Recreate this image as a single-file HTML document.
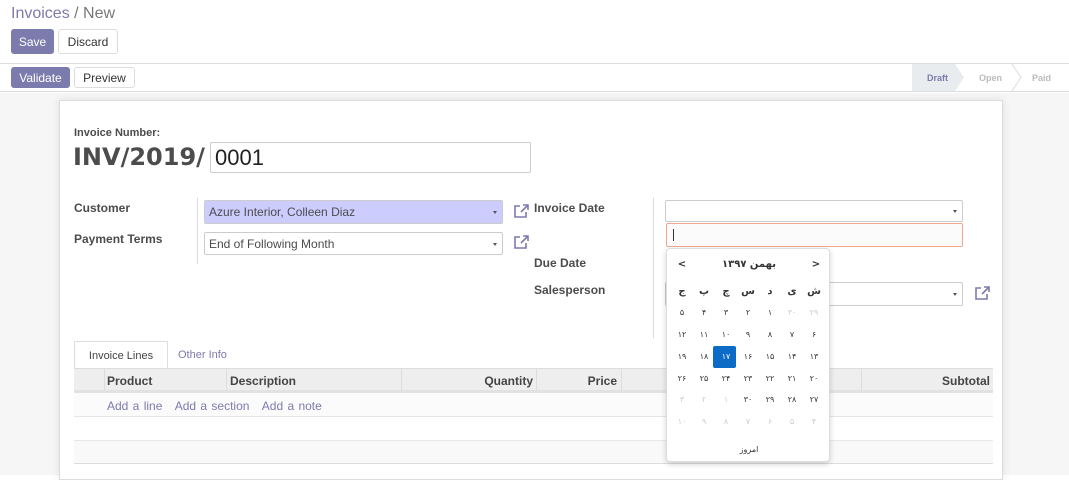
<!DOCTYPE html>
<html><head><meta charset="utf-8"><style>
*{box-sizing:border-box;margin:0;padding:0}
body{width:1069px;height:475px;overflow:hidden;font-family:"Liberation Sans","DejaVu Sans",sans-serif;font-size:12px;color:#4c4c4c;background:#fff;position:relative}
.a{position:absolute}
.btn{position:absolute;border:1px solid #ddd;border-radius:3px;font-size:12px;display:flex;align-items:center;justify-content:center;background:#fff;color:#333}
.pri{background:#7c7bad;border-color:#7c7bad;color:#fff}
.lbl{position:absolute;font-weight:bold;font-size:12px;color:#4c4c4c}
.inp{position:absolute;border:1px solid #ccc;border-radius:2px;background:#fff;font-size:12px;padding-left:4px;display:flex;align-items:center}
.caret:after{content:"";position:absolute;right:5px;top:50%;border:2px solid transparent;border-top:3px solid #555;margin-top:-1px}
.ext{position:absolute;width:16px;height:14px}
.cal{position:absolute;left:666px;top:248px;width:164px;height:214px;background:#fff;border:1px solid #ddd;border-radius:4px;box-shadow:0 2px 6px rgba(0,0,0,.18);font-family:"DejaVu Sans",sans-serif;font-size:8px;color:#333}
.row{position:absolute;left:4px;width:156px;display:flex}
.row span{width:22px;text-align:center}
.f{color:#ccc}
</style></head><body>
<div class="a" style="left:11px;top:5px;font-size:16px;color:#7c7bad">Invoices <span style="color:#777">/ New</span></div>
<div class="btn pri" style="left:11px;top:29px;width:43px;height:25px">Save</div>
<div class="btn" style="left:58px;top:29px;width:60px;height:25px">Discard</div>
<div class="a" style="left:0;top:63px;width:1069px;height:29px;border-top:1px solid #ddd;border-bottom:1px solid #ddd;background:#fff"></div>
<div class="btn pri" style="left:11px;top:67px;width:59px;height:21px">Validate</div>
<div class="btn" style="left:74px;top:67px;width:61px;height:21px">Preview</div>
<svg class="a" style="left:912px;top:64px" width="157" height="27"><polygon points="0,0 43,0 52,13.5 43,27 0,27" fill="#e9ecef"/><polyline points="100,0 109,13.5 100,27" fill="none" stroke="#ddd"/><text x="15" y="17" font-size="9" font-weight="bold" fill="#7c7bad" font-family="Liberation Sans">Draft</text><text x="67" y="17" font-size="9" font-weight="bold" fill="#bbb" font-family="Liberation Sans">Open</text><text x="120" y="17" font-size="9" font-weight="bold" fill="#bbb" font-family="Liberation Sans">Paid</text></svg>
<div class="a" style="left:0;top:93px;width:1069px;height:382px;background:#f6f6f6"></div>
<div class="a" style="left:59px;top:100px;width:944px;height:380px;background:#fff;border:1px solid #ddd;box-shadow:0 0 8px rgba(0,0,0,.1)"></div>
<div class="lbl" style="left:74px;top:127px;font-size:11px">Invoice Number:</div>
<div class="a" style="left:73px;top:143px;font-size:24px;font-weight:bold;color:#4c4c4c;font-family:'DejaVu Sans',sans-serif">INV/2019/</div>
<div class="inp" style="left:210px;top:142px;width:321px;height:31px;font-size:22px;color:#222">0001</div>
<div class="lbl" style="left:74px;top:201px">Customer</div>
<div class="lbl" style="left:74px;top:232px">Payment Terms</div>
<div class="a" style="left:197px;top:198px;width:1px;height:66px;background:#ddd"></div>
<div class="inp caret" style="left:204px;top:200px;width:299px;height:24px;background:#ccf;border-color:#ccc">Azure Interior, Colleen Diaz</div>
<div class="inp caret" style="left:204px;top:232px;width:299px;height:23px">End of Following Month</div>
<svg class="ext" style="left:513px;top:204px" viewBox="0 0 16 14"><path d="M7 2H2v11h11V8" fill="none" stroke="#7c7bad" stroke-width="1.6"/><path d="M8 8l7-7M10 1h5v5" fill="none" stroke="#7c7bad" stroke-width="1.6"/></svg>
<svg class="ext" style="left:513px;top:235px" viewBox="0 0 16 14"><path d="M7 2H2v11h11V8" fill="none" stroke="#7c7bad" stroke-width="1.6"/><path d="M8 8l7-7M10 1h5v5" fill="none" stroke="#7c7bad" stroke-width="1.6"/></svg>
<div class="lbl" style="left:534px;top:201px">Invoice Date</div>
<div class="lbl" style="left:534px;top:256px">Due Date</div>
<div class="lbl" style="left:534px;top:283px">Salesperson</div>
<div class="a" style="left:653px;top:198px;width:1px;height:140px;background:#ddd"></div>
<div class="inp caret" style="left:665px;top:200px;width:298px;height:22px"></div>
<div class="inp" style="left:666px;top:223px;width:297px;height:24px;border-color:#f0a88f;background:#fbfbfb"><span style="width:1px;height:12px;background:#333;margin-left:2px"></span></div>
<div class="inp caret" style="left:665px;top:282px;width:298px;height:24px"></div>
<svg class="ext" style="left:974px;top:286px" viewBox="0 0 16 14"><path d="M7 2H2v11h11V8" fill="none" stroke="#7c7bad" stroke-width="1.6"/><path d="M8 8l7-7M10 1h5v5" fill="none" stroke="#7c7bad" stroke-width="1.6"/></svg>
<div class="a" style="left:74px;top:341px;width:94px;height:28px;border:1px solid #ddd;border-bottom:none;background:#fff;font-size:11px;display:flex;align-items:center;justify-content:center;color:#444">Invoice Lines</div>
<div class="a" style="left:178px;top:349px;font-size:11px;color:#7c7bad">Other Info</div>
<div class="a" style="left:74px;top:368px;width:919px;height:25px;background:#eee;border-top:1px solid #ddd;border-bottom:3px solid #e2e2e2;font-weight:bold;font-size:12px;color:#444">
<div class="a" style="left:30px;top:0;width:1px;height:22px;background:#ddd"></div>
<div class="a" style="left:152px;top:0;width:1px;height:22px;background:#ddd"></div>
<div class="a" style="left:327px;top:0;width:1px;height:22px;background:#ddd"></div>
<div class="a" style="left:462px;top:0;width:1px;height:22px;background:#ddd"></div>
<div class="a" style="left:547px;top:0;width:1px;height:22px;background:#ddd"></div>
<div class="a" style="left:787px;top:0;width:1px;height:22px;background:#ddd"></div>
<div class="a" style="left:33px;top:5px">Product</div>
<div class="a" style="left:156px;top:5px">Description</div>
<div class="a" style="right:460px;top:5px">Quantity</div>
<div class="a" style="right:376px;top:5px">Price</div>
<div class="a" style="right:3px;top:5px">Subtotal</div>
</div>
<div class="a" style="left:74px;top:393px;width:919px;height:24px;background:#fbfbfb;border-bottom:1px solid #e5e5e5;color:#7c7bad;font-size:12px;padding:6px 0 0 33px;word-spacing:1px">Add a line &nbsp; Add a section &nbsp; Add a note</div>
<div class="a" style="left:74px;top:440px;width:919px;height:24px;background:#f9f9f9;border-top:1px solid #e8e8e8;border-bottom:1px solid #ddd"></div>
<div class="cal">
<div class="row" style="top:10px;font-size:10px;font-weight:bold"><span>&lt;</span><span style="width:112px">بهمن ۱۳۹۷</span><span>&gt;</span></div>
<div class="row" style="top:37px;font-size:10px;font-weight:bold"><span>ج</span><span>پ</span><span>چ</span><span>س</span><span>د</span><span>ی</span><span>ش</span></div>
<div class="row" style="top:59px"><span>۵</span><span>۴</span><span>۳</span><span>۲</span><span>۱</span><span class="f">۳۰</span><span class="f">۲۹</span></div>
<div class="row" style="top:81px"><span>۱۲</span><span>۱۱</span><span>۱۰</span><span>۹</span><span>۸</span><span>۷</span><span>۶</span></div>
<div class="a" style="left:46px;top:97px;width:23px;height:22px;background:#0b6bc7;border-radius:2px"></div>
<div class="row" style="top:103px"><span>۱۹</span><span>۱۸</span><span style="color:#fff">۱۷</span><span>۱۶</span><span>۱۵</span><span>۱۴</span><span>۱۳</span></div>
<div class="row" style="top:125px"><span>۲۶</span><span>۲۵</span><span>۲۴</span><span>۲۳</span><span>۲۲</span><span>۲۱</span><span>۲۰</span></div>
<div class="row" style="top:146px"><span class="f">۳</span><span class="f">۲</span><span class="f">۱</span><span>۳۰</span><span>۲۹</span><span>۲۸</span><span>۲۷</span></div>
<div class="row" style="top:168px"><span class="f">۱۰</span><span class="f">۹</span><span class="f">۸</span><span class="f">۷</span><span class="f">۶</span><span class="f">۵</span><span class="f">۴</span></div>
<div class="row" style="top:196px;justify-content:center"><span style="width:60px">امروز</span></div>
</div>
</body></html>
